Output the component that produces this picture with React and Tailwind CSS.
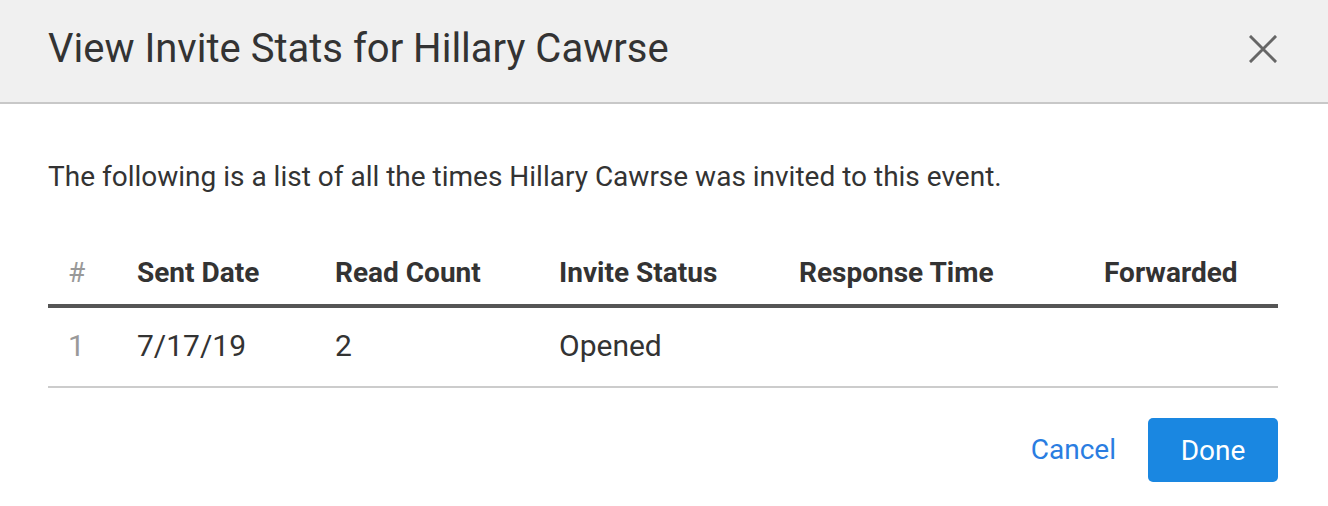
const columns = ['#', 'Sent Date', 'Read Count', 'Invite Status', 'Response Time', 'Forwarded'];
const rows = [['1', '7/17/19', '2', 'Opened', '', '']];

const grid = 'grid grid-cols-[69px_198px_224px_240px_305px_1fr]';

export default function App() {
  return (
    <div className="w-[1328px] h-[506px] bg-white text-[#333] font-['Roboto',sans-serif]">
      {/* Header */}
      <div className="h-[104px] bg-[#f0f0f0] border-b-2 border-[#c8c8c8] pl-12 pr-[50px] flex items-center justify-between">
        <h1 className="text-[40px] leading-[48px] font-normal -mt-1">View Invite Stats for Hillary Cawrse</h1>
        <button className="-mt-1 mr-[1px]">
          <svg width="28" height="28" viewBox="0 0 28 28" fill="none" stroke="#666" strokeWidth="3" strokeLinecap="square">
            <path d="M2 2 26 26M26 2 2 26" />
          </svg>
        </button>
      </div>

      {/* Body */}
      <div className="pl-12 pr-[50px]">
        <p className="text-[28px] mt-[55px] leading-[36px]">
          The following is a list of all the times Hillary Cawrse was invited to this event.
        </p>

        <div className="mt-[61px]">
          <div className={`${grid} border-b-4 border-[#555] pb-[14px]`}>
            {columns.map((c, i) => (
              <div key={c} className={`pl-5 text-[28px] leading-[34px] ${i === 0 ? 'text-[#999] font-normal' : 'font-bold'}`}>{c}</div>
            ))}
          </div>
          {rows.map((r, ri) => (
            <div key={ri} className={`${grid} border-b-2 border-[#ccc] h-[80px] items-center pb-1`}>
              {r.map((v, i) => (
                <div key={i} className={`pl-5 text-[30px] ${i === 0 ? 'text-[#999]' : ''}`}>{v}</div>
              ))}
            </div>
          ))}
        </div>

        {/* Footer */}
        <div className="flex justify-end items-center gap-8 mt-[30px]">
          <button className="text-[#2a7de1] text-[28px]">Cancel</button>
          <button className="bg-[#1a87e1] text-white text-[28px] w-[130px] h-[64px] rounded-[5px] pt-[2px]">Done</button>
        </div>
      </div>
    </div>
  );
}
